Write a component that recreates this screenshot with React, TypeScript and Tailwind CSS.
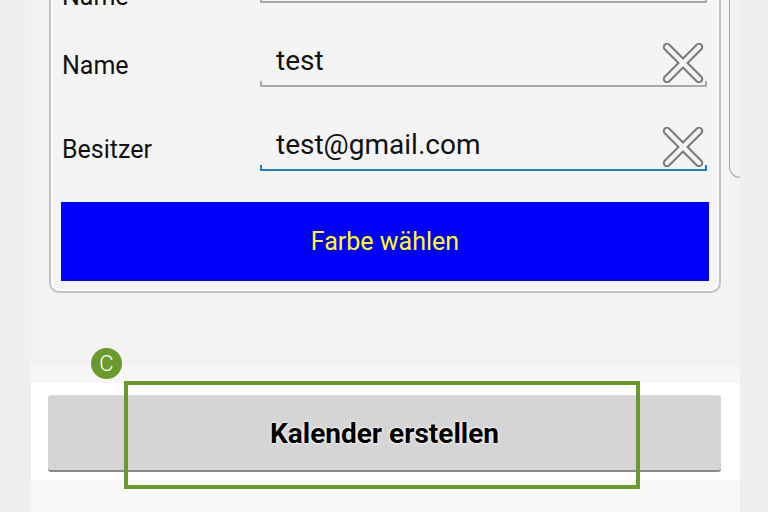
import React from "react";

function ClearIcon() {
  return (
    <svg width="42" height="40" viewBox="0 0 42 40" className="shrink-0">
      <g strokeLinecap="round">
        <line x1="5" y1="4" x2="37" y2="36" stroke="#7a7a7a" strokeWidth="8.5" />
        <line x1="37" y1="4" x2="5" y2="36" stroke="#7a7a7a" strokeWidth="8.5" />
        <line x1="5" y1="4" x2="37" y2="36" stroke="#f4f4f4" strokeWidth="4.5" />
        <line x1="37" y1="4" x2="5" y2="36" stroke="#f4f4f4" strokeWidth="4.5" />
      </g>
    </svg>
  );
}

function Row({
  label,
  value,
  focused,
  icon = true,
  low,
}: {
  label: string;
  value: string;
  focused?: boolean;
  icon?: boolean;
  low?: boolean;
}) {
  return (
    <div className="flex h-[84px] items-end">
      <div
        className={
          low
            ? "mb-[-15px] w-[199px] pb-[6px] pl-[1px] text-[25px] leading-[30px] text-[#111]"
            : "w-[199px] pb-[6px] pl-[1px] text-[25px] leading-[30px] text-[#111]"
        }
      >
        {label}
      </div>
      <div className="mr-[2px] flex flex-1 flex-col">
        <div className="flex h-[42px] items-end">
          <div className="flex-1 pb-[5px] pl-[16px] text-[28px] leading-[30px] text-[#111]">{value}</div>
          {icon && (
            <div className="mr-[3px] mb-[-2px]">
              <ClearIcon />
            </div>
          )}
        </div>
        <div
          className={
            focused
              ? "h-[6px] border-x-2 border-b-2 border-[#1b7fc6]"
              : "h-[6px] border-x-2 border-b-2 border-[#a9a9a9]"
          }
        />
      </div>
    </div>
  );
}

export default function App() {
  return (
    <div
      className="relative flex h-[512px] w-[768px] overflow-hidden bg-[#efefef]"
      style={{ fontFamily: "Roboto, 'Noto Sans', 'Liberation Sans', sans-serif" }}
    >
      <div className="w-[31px] shrink-0" />
      <div className="relative flex w-[709px] shrink-0 flex-col bg-[#f3f3f3]">
        <div className="mt-[-81px] ml-[18px] w-[672px] rounded-b-[10px] border-2 border-t-0 border-[#c2c2c2] bg-[#f4f4f4] px-[10px] pb-[10px] shadow-[inset_0_-2px_0_0_#fbfbfb,inset_2px_0_0_0_#fbfbfb,inset_-2px_0_0_0_#fbfbfb]">
          <Row label="Name" value="" icon={false} low />
          <Row label="Name" value="test" />
          <Row label="Besitzer" value="test@gmail.com" focused />
          <div className="mt-[31px] flex h-[79px] items-center justify-center bg-[#0000ff] text-[25px] text-[#ffff00]">
            Farbe wählen
          </div>
        </div>
        <div className="h-[72px]" />
        <div className="h-[18px] bg-[#f6f6f6]" />
        <div className="h-[97px] bg-white pt-[12px]">
          <div className="mr-[19px] ml-[17px] flex h-[77px] items-center justify-center rounded-[3px] border-t border-b-2 border-t-[#dcdcdc] border-b-[#8a8a8a] bg-[#d5d5d5] pt-[2px] text-[28px] font-bold text-black [text-shadow:0_0_3px_#fff,0_0_2px_#fff]">
            Kalender erstellen
          </div>
        </div>
        <div className="flex-1 bg-[#f7f7f7]" />
        <div className="absolute top-[-12px] left-[698px] h-[190px] w-[11px] rounded-bl-[14px] border-b border-l border-[#a8a8a8]" />
      </div>

      <div className="absolute top-[348px] left-[91px] flex h-[31px] w-[31px] items-center justify-center rounded-full bg-[#6a9a2c] text-[22px] font-light leading-none text-white">
        C
      </div>
      <div className="absolute top-[381px] left-[124px] h-[108px] w-[516px] border-4 border-[#6a9a2c]" />
    </div>
  );
}
